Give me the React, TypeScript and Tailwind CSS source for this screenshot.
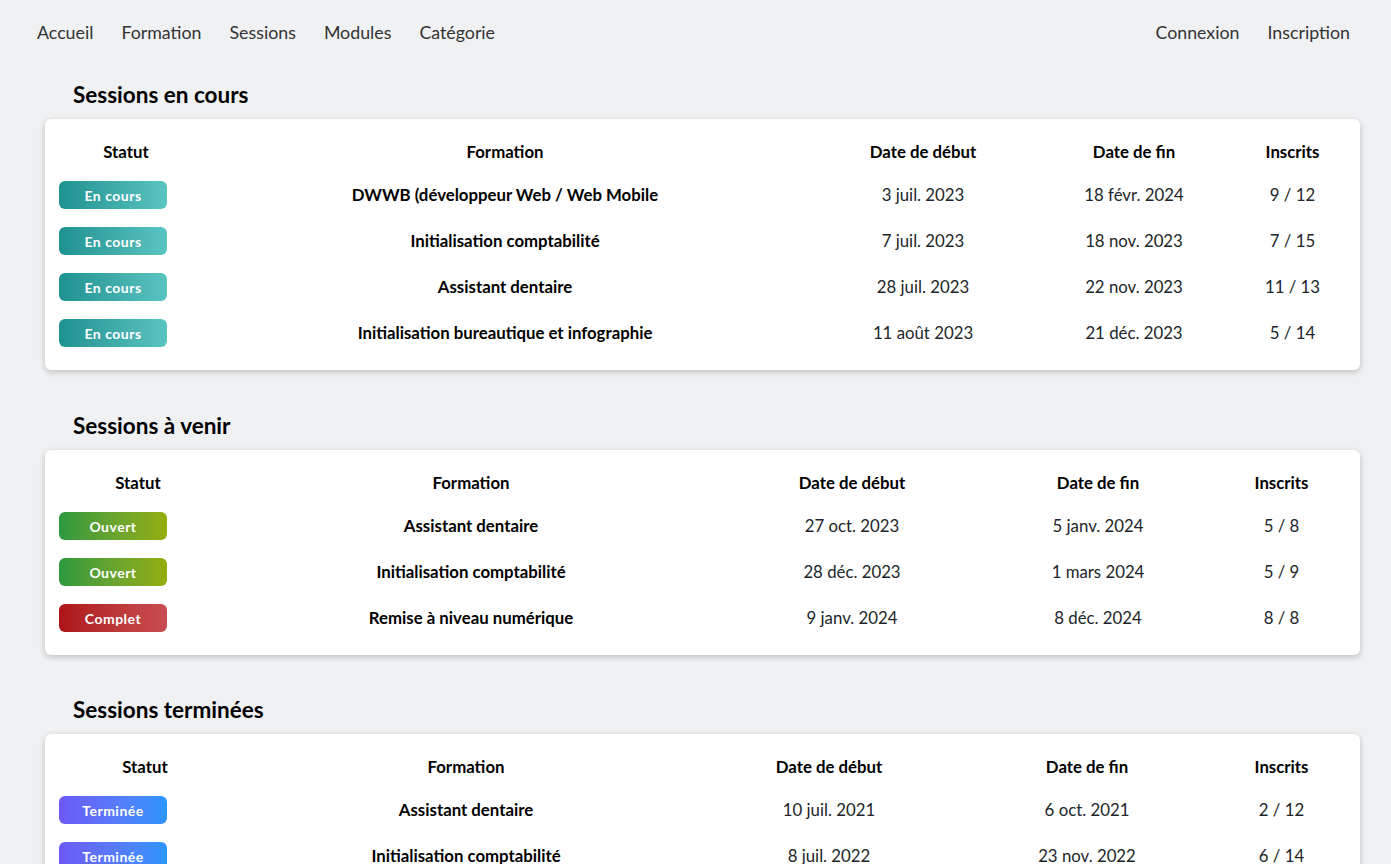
import React from "react";

type Row = { s: string; f: string; d: string; e: string; i: string };

const badge: Record<string, string> = {
  "En cours": "bg-gradient-to-r from-[#1c9291] to-[#5ac4c1]",
  Ouvert: "bg-gradient-to-r from-[#2a993e] to-[#93ae08]",
  Complet: "bg-gradient-to-r from-[#ad1418] to-[#c84d52]",
  Terminée: "bg-gradient-to-r from-[#6c59f5] to-[#2a96ff]",
};

const cours: Row[] = [
  { s: "En cours", f: "DWWB (développeur Web / Web Mobile", d: "3 juil. 2023", e: "18 févr. 2024", i: "9 / 12" },
  { s: "En cours", f: "Initialisation comptabilité", d: "7 juil. 2023", e: "18 nov. 2023", i: "7 / 15" },
  { s: "En cours", f: "Assistant dentaire", d: "28 juil. 2023", e: "22 nov. 2023", i: "11 / 13" },
  { s: "En cours", f: "Initialisation bureautique et infographie", d: "11 août 2023", e: "21 déc. 2023", i: "5 / 14" },
];
const venir: Row[] = [
  { s: "Ouvert", f: "Assistant dentaire", d: "27 oct. 2023", e: "5 janv. 2024", i: "5 / 8" },
  { s: "Ouvert", f: "Initialisation comptabilité", d: "28 déc. 2023", e: "1 mars 2024", i: "5 / 9" },
  { s: "Complet", f: "Remise à niveau numérique", d: "9 janv. 2024", e: "8 déc. 2024", i: "8 / 8" },
];
const terminees: Row[] = [
  { s: "Terminée", f: "Assistant dentaire", d: "10 juil. 2021", e: "6 oct. 2021", i: "2 / 12" },
  { s: "Terminée", f: "Initialisation comptabilité", d: "8 juil. 2022", e: "23 nov. 2022", i: "6 / 14" },
];

function Section({
  title,
  rows,
  cols,
  mt,
}: {
  title: string;
  rows: Row[];
  cols: string[];
  mt: string;
}) {
  return (
    <section className={mt}>
      <h2 className="ml-[73px] text-[22.5px] font-bold leading-[28px] text-black">{title}</h2>
      <div className="ml-[45px] mr-[31px] mt-[10px] rounded-md bg-white px-[14px] pt-[14px] pb-[14px] shadow-[0_2px_6px_rgba(0,0,0,0.22)]">
        <table className="w-full table-fixed border-collapse">
          <colgroup>
            {cols.map((c, k) => (
              <col key={k} className={c} />
            ))}
          </colgroup>
          <thead>
            <tr className="h-[39px] text-[16.8px] font-bold text-black">
              <th className="pb-[2px] text-center font-bold">Statut</th>
              <th className="pb-[2px] text-center font-bold">Formation</th>
              <th className="pb-[2px] text-center font-bold">Date de début</th>
              <th className="pb-[2px] text-center font-bold">Date de fin</th>
              <th className="pb-[2px] text-center font-bold">Inscrits</th>
            </tr>
          </thead>
          <tbody>
            {rows.map((r, k) => (
              <tr key={k} className="h-[46px] text-[16.8px] text-[#212529]">
                <td className="text-left align-middle">
                  <span
                    className={`inline-flex h-[28px] w-[108px] items-center justify-center rounded-[6px] text-[14px] font-bold tracking-[0.5px] text-white ${badge[r.s]}`}
                  >
                    {r.s}
                  </span>
                </td>
                <td className="text-center font-bold text-black">{r.f}</td>
                <td className="text-center">{r.d}</td>
                <td className="text-center">{r.e}</td>
                <td className="text-center">{r.i}</td>
              </tr>
            ))}
          </tbody>
        </table>
      </div>
    </section>
  );
}

export default function App() {
  return (
    <div
      className="min-h-[864px] bg-[#f0f1f3] pb-10"
      style={{ fontFamily: "Lato, 'Noto Sans', sans-serif" }}
    >
      <nav className="flex h-[64px] items-center justify-between pl-[23px] pr-[27px] text-[17.8px] text-[#333333]">
        <ul className="flex">
          {["Accueil", "Formation", "Sessions", "Modules", "Catégorie"].map((n) => (
            <li key={n} className="px-[14px]">
              {n}
            </li>
          ))}
        </ul>
        <ul className="flex">
          {["Connexion", "Inscription"].map((n) => (
            <li key={n} className="px-[14px]">
              {n}
            </li>
          ))}
        </ul>
      </nav>
      <Section
        title="Sessions en cours"
        rows={cours}
        mt="mt-[17px]"
        cols={["w-[134px]", "w-[624px]", "w-[212px]", "w-[210px]", "w-[107px]"]}
      />
      <Section
        title="Sessions à venir"
        rows={venir}
        mt="mt-[42px]"
        cols={["w-[158px]", "w-[508px]", "w-[254px]", "w-[238px]", "w-[129px]"]}
      />
      <Section
        title="Sessions terminées"
        rows={terminees}
        mt="mt-[41px]"
        cols={["w-[172px]", "w-[470px]", "w-[256px]", "w-[260px]", "w-[129px]"]}
      />
    </div>
  );
}
